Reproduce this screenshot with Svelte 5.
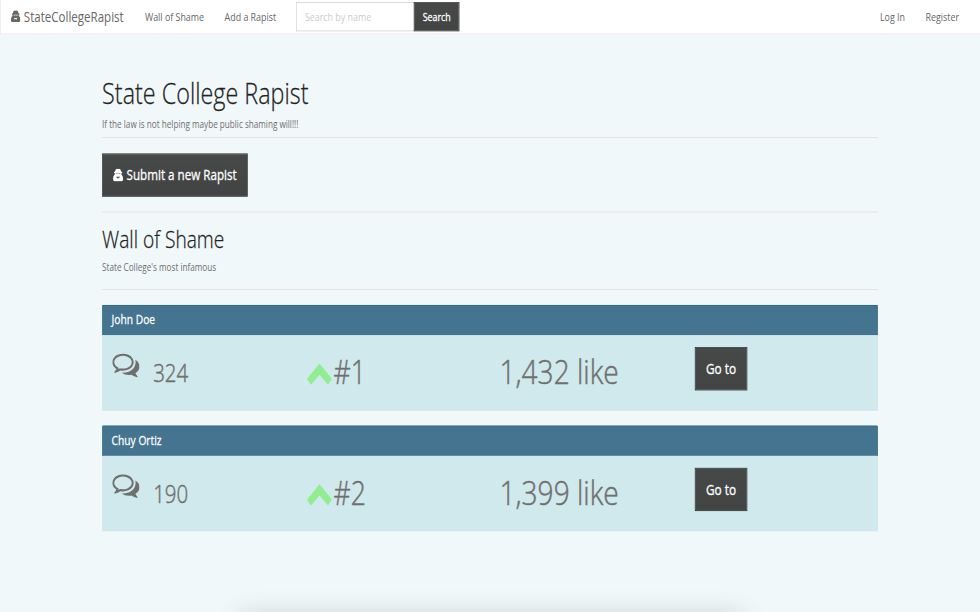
<script>
  const people = [
    { name: 'John Doe', comments: 324, rank: '#1', likes: '1,432' },
    { name: 'Chuy Ortiz', comments: 190, rank: '#2', likes: '1,399' }
  ];
</script>

{#snippet agent()}
  <svg class="agent" viewBox="0 0 16 18" aria-hidden="true">
    <path fill="currentColor" fill-rule="evenodd" d="M4.500 .7Q6.500 -.3 8 .4Q9.500 -.3 11.500 .7L12.800 4Q14.600 4.600 14.600 5.400Q14.400 6.100 13.300 6.400V8Q15.800 10 15.800 13.500V15.500Q15.800 17.700 13.500 17.700H2.500Q.2 17.700 .2 15.500V13.500Q.2 10 2.700 8V6.400Q1.600 6.100 1.400 5.400Q1.400 4.600 3.200 4ZM4.300 6.600V7.300Q6 8 7.500 7.200H8.500Q10 8 11.700 7.300V6.600ZM5.300 11L6.600 14.200L8 12.500L9.400 14.200L10.700 11L8.700 11.500H7.300Z" />
  </svg>
{/snippet}

<div class="screen">
  <div class="page">
    <nav>
      <a class="brand" href="#home">{@render agent()}<span class="t">StateCollegeRapist</span></a>
      <a class="wall" href="#wall"><span class="t">Wall of Shame</span></a>
      <a class="add" href="#add"><span class="t">Add a Rapist</span></a>
      <form>
        <div class="field"><input placeholder="Search by name" aria-label="Search by name" /></div>
        <button type="button" class="search"><span class="t">Search</span></button>
      </form>
      <div class="account">
        <a class="login" href="#login"><span class="t">Log In</span></a>
        <a class="register" href="#register"><span class="t">Register</span></a>
      </div>
    </nav>

    <main>
      <h1><span class="t">State College Rapist</span></h1>
      <p class="tagline"><span class="t">If the law is not helping maybe public shaming will!!!</span></p>
      <hr />
      <button type="button" class="large submit">{@render agent()}<span class="t">Submit a new Rapist</span></button>
      <hr />
      <h2><span class="t">Wall of Shame</span></h2>
      <p class="infamous"><span class="t">State College's most infamous</span></p>
      <hr />
      {#each people as person}
        <section>
          <header><span class="t">{person.name}</span></header>
          <div class="row">
            <div class="comments">
              <svg viewBox="0 256 1792 1408" aria-hidden="true"><path fill="currentColor" d="M704 384q-153 0-286 52t-211.500 141-78.500 191q0 82 53 158t149 132l97 56-35 84q34-20 62-39l44-31 53 10q78 14 153 14 153 0 286-52t211.500-141 78.500-191-78.500-191-211.500-141-286-52zM704 256q191 0 353.500 68.500t256.500 186.500 94 257-94 257-256.500 186.500-353.500 68.500q-86 0-176-16-124 88-278 128-36 9-86 16h-3q-11 0-20.500-8t-11.500-21q-1-3-1-6.500t.5-6.500 2-6l2.500-5 3.500-5.500 4-5 4.500-5 4-4.500q5-6 23-25t26-29.500 22.500-29 25-38.500 20.500-44q-124-72-195-177t-71-224q0-139 94-257t256.500-186.500 353.500-68.500zM1526 1425q10 24 20.500 44t25 38.500 22.500 29 26 29.500 23 25q1 1 4 4.500t4.500 5 4 5 3.500 5.500l2.500 5 2 6 .5 6.500-1 6.500q-3 14-13 22t-22 7q-50-7-86-16-154-40-278-128-90 16-176 16-271 0-472-132 58 4 88 4 161 0 309-45t264-129q125-92 192-212t67-254q0-77-23-152 129 71 204 178t75 230q0 120-71 224.500t-195 176.500z" /></svg>
              <span class="t">{person.comments}</span>
            </div>
            <div class="rank">
              <svg viewBox="0 0 36 29" aria-hidden="true"><path fill="#90ee90" d="M18 0L36 20Q36 21 30.500 28.500L18 15L5.500 28.500Q0 22 0 20Z" /></svg>
              <span class="t">{person.rank}</span>
            </div>
            <div class="likes"><span class="t">{person.likes} like</span></div>
            <div class="go"><button type="button" class="large"><span class="t">Go to</span></button></div>
          </div>
        </section>
      {/each}
    </main>
    <div class="dock"></div>
  </div>
</div>

<style>
  :global(body) { overflow: hidden; background: #f0f8fa; }
  .screen { width: 980px; height: 612px; overflow: hidden; contain: strict; }
  .page {
    position: relative;
    width: 1440px;
    height: 821.400px;
    overflow: hidden;
    transform: scale(0.68056, 0.745);
    transform-origin: 0 0;
    background: #f0f8fa;
    color: #6f6f6f;
    font-family: "Open Sans", "Liberation Sans", sans-serif;
  }
  .page * { box-sizing: border-box; }
  .t { display: inline-block; transform: scaleX(0.87); transform-origin: 0 50%; white-space: nowrap; }
  nav {
    display: flex;
    align-items: center;
    height: 46px;
    padding: 0 0 1px 15px;
    background: #fff;
    border-bottom: 1px solid #e7e7e7;
    border-left: 1px solid #e7e7e7;
    font-size: 15px;
    white-space: nowrap;
  }
  a { color: #666; text-decoration: none; }
  .brand { display: flex; align-items: center; gap: 5px; width: 197px; font-size: 19.500px; }
  .agent { flex: none; width: 15px; height: 18px; }
  .brand .agent { width: 14px; }
  .wall { width: 117px; }
  .add { width: 105px; }
  form { display: flex; height: 39px; }
  .field { width: 173px; }
  input {
    width: 200px;
    height: 39px;
    padding: 0 14px;
    border: 1px solid #ccc;
    border-right: 0;
    background: #fff;
    font: 15px "Open Sans", sans-serif;
    transform: scaleX(0.87);
    transform-origin: 0 50%;
  }
  input::placeholder { color: #ccc; opacity: 1; }
  button {
    position: relative;
    display: flex;
    align-items: center;
    justify-content: center;
    padding: 0;
    border: 1px solid #222;
    border-radius: 0;
    background: linear-gradient(#474949, #424444);
    color: #fff;
    font: 15px "Open Sans", sans-serif;
    -webkit-text-stroke: 0.4px #fff;
    white-space: nowrap;
  }
  button .t { transform-origin: 50% 50%; }
  .search { width: 67px; }
  .account { display: flex; margin-left: auto; }
  .login { width: 67px; }
  .register { width: 80px; }
  main { width: 1140px; margin: 0 auto; padding-top: 53px; }
  h1, h2 { margin: 0; color: #222; font-weight: 300; -webkit-text-stroke: 0.35px #222; }
  h1 { height: 51px; font-size: 39px; line-height: 51px; }
  h2 { height: 44px; font-size: 32px; line-height: 42px; }
  h1 .t, h2 .t { transform: scaleX(0.88); }
  p { margin: 0; font-size: 14px; line-height: 22px; height: 20px; }
  p .t { transform: scaleX(0.855); }
  .tagline { margin-top: 6px; }
  .infamous { margin-top: 4px; }
  hr { height: 1px; margin: 0; border: 0; background: #ddd; }
  .tagline + hr { margin: 8px 0 21px; }
  .submit + hr { margin: 20px 0 15px; }
  .infamous + hr { margin: 20px 0 20px; }
  .large { height: 58px; padding-bottom: 1px; font-size: 20px; }
  .submit { justify-content: flex-start; gap: 5px; width: 214px; padding-left: 15px; }
  .submit .t { transform: scaleX(0.855); transform-origin: 0 50%; }
  section { height: 142px; margin-bottom: 20px; background: #d0e9ec; border: 1px solid #d5e6ea; border-top: 0; }
  header {
    height: 41px;
    margin: 0 -1px;
    padding: 0 13px;
    border: 1px solid #22637f;
    border-bottom-color: #457490;
    border-radius: 2px 2px 0 0;
    background: #457490;
    color: #fff;
    font-size: 17px;
    -webkit-text-stroke: 0.35px #fff;
    line-height: 38px;
  }
  header .t { transform: scaleX(0.885); }
  .row { display: grid; grid-template-columns: repeat(4, 285px); padding-top: 16px; white-space: nowrap; }
  .row > div { padding-left: 15px; font-weight: 300; }
  .comments .t, .rank .t, .likes .t { -webkit-text-stroke: 0.6px #6f6f6f; }
  .row > .comments { display: flex; gap: 20px; padding-left: 14px; }
  .comments svg { width: 40px; height: 35px; margin-top: 7px; }
  .comments .t { font-size: 34px; line-height: 69px; transform: scaleX(0.885); }
  .rank { display: flex; gap: 2px; font-size: 45px; line-height: 66px; }
  .rank svg { width: 37px; height: 29px; margin-top: 22px; }
  .likes { font-size: 45px; line-height: 66px; }
  .row > .likes { padding-left: 13px; }
  .likes .t { transform: scaleX(0.917); }
  .go button { width: 77px; }
  .dock {
    position: absolute;
    top: 826px;
    left: 350px;
    width: 744px;
    height: 60px;
    box-shadow: 0 0 36px rgba(0, 0, 0, 0.17);
  }
</style>
